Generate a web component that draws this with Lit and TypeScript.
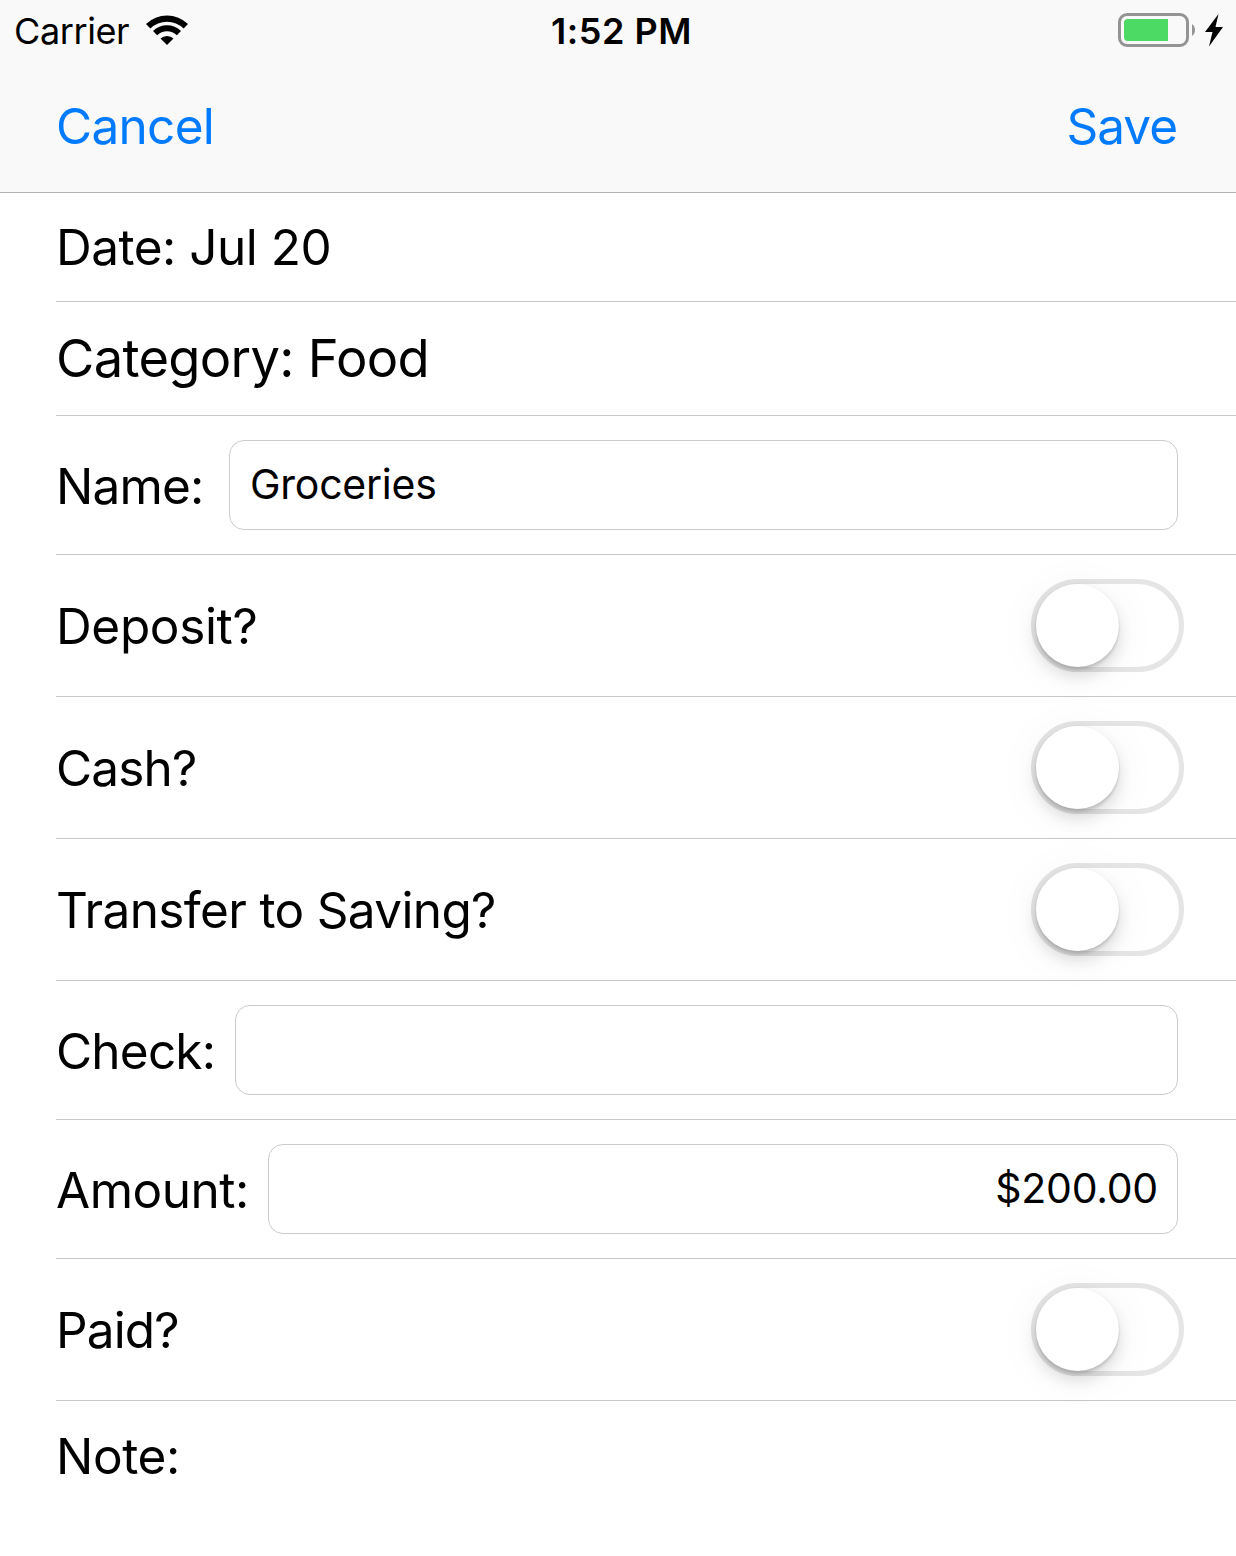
import { LitElement, html, css } from "lit";
import { customElement, property } from "lit/decorators.js";

@customElement("ios-switch")
class IosSwitch extends LitElement {
  static styles = css`
    :host { display: block; flex: none; width: 153px; height: 93px; }
    .track { box-sizing: border-box; width: 153px; height: 93px; border: 5px solid #e5e5e5; border-radius: 47px; background: #fff; }
    .knob { width: 83px; height: 83px; border-radius: 50%; background: #fff; box-shadow: 0 0 0 1px rgba(0,0,0,.02), 0 3px 3px rgba(0,0,0,.13), 0 9px 16px rgba(0,0,0,.13), 0 6px 50px rgba(0,0,0,.05); }
  `;
  render() { return html`<div class="track"><div class="knob"></div></div>`; }
}

@customElement("text-box")
class TextBox extends LitElement {
  @property() value = "";
  static styles = css`
    :host { display: flex; flex: none; box-sizing: border-box; height: 90px; margin-left: auto; border: 1px solid #cbcbcb; border-radius: 15px; background: #fff; padding: 16px 20px 0; font-size: 41px; line-height: 54px; letter-spacing: -0.25px; }
    :host([align="end"]) { justify-content: flex-end; padding-right: 19px; }
  `;
  render() { return html`<span>${this.value}</span>`; }
}

@customElement("form-row")
class FormRow extends LitElement {
  @property() label = "";
  static styles = css`
    :host { display: flex; box-sizing: border-box; align-items: center; height: 142px; margin-left: 56px; border-bottom: 1px solid #c8c7cc; font-size: 49.5px; }
    :host([kind="date"]) { height: 109px; }
    :host([kind="category"]) { height: 114px; font-size: 52.5px; }
    :host([kind="field"]) { height: 139px; padding-right: 58px; }
    :host([kind="toggle"]) { justify-content: space-between; padding-right: 52px; }
    :host([kind="note"]) { height: 155px; align-items: flex-start; padding-top: 25px; border-bottom: 0; }
    .label { flex: none; white-space: nowrap; line-height: 60px; }
    :host([kind="field"]) .label { padding-top: 2px; }
    :host([kind="toggle"]) .label { padding-top: 1px; }
    :host([kind="category"]) .label { padding-bottom: 2px; }
  `;
  render() { return html`<span class="label">${this.label}</span><slot></slot>`; }
}

@customElement("app-root")
export class AppRoot extends LitElement {
  static styles = css`
    :host { display: block; width: 1236px; height: 1556px; overflow: hidden; background: #fff; color: #000; font-family: Inter, sans-serif; font-size: 49.5px; }
    .header { box-sizing: border-box; height: 193px; background: #f9f9f9; border-bottom: 1px solid #b2b2b2; }
    .status { display: grid; grid-template-columns: 1fr auto 1fr; height: 62px; align-items: center; font-size: 36px; line-height: 44px; }
    .carrier { display: flex; align-items: center; gap: 16px; padding-left: 14px; letter-spacing: -0.4px; }
    .time { font-weight: 600; letter-spacing: 0.5px; padding-left: 7px; }
    .power { display: flex; justify-content: flex-end; padding-right: 10px; }
    .wifi, .battery { display: block; margin-bottom: 3px; }
    .nav { display: flex; justify-content: space-between; padding: 34px 59px 0 56px; line-height: 60px; color: #007aff; letter-spacing: -0.7px; }
    .save { letter-spacing: -1px; }
    .t-date, .t-amount { letter-spacing: -0.5px; }
    .t-category { letter-spacing: -0.7px; }
    .t-name, .t-check { letter-spacing: -0.8px; }
    .t-deposit { letter-spacing: -0.35px; }
    .t-cash, .t-paid { letter-spacing: -0.85px; }
    .t-transfer { letter-spacing: -0.65px; }
    .t-note { letter-spacing: -0.4px; }
    .name { width: 949px; }
    .check { width: 943px; }
    .amount { width: 910px; }
  `;
  render() {
    return html`
      <div class="header">
        <div class="status">
          <div class="carrier"><span>Carrier</span>
            <svg class="wifi" width="44" height="32" viewBox="0 0 44 32">
              <path d="M1 10A30.5 30.5 0 0 1 43 10L38.6 14.4A24 24 0 0 0 5.4 14.4Z"/>
              <path d="M8 17A20 20 0 0 1 36 17L31.8 21.3A14 14 0 0 0 12.2 21.3Z"/>
              <path d="M15.5 24.5A9.5 9.5 0 0 1 28.5 24.5L22 31Z"/>
            </svg>
          </div>
          <span class="time">1:52 PM</span>
          <div class="power">
            <svg class="battery" width="108" height="34" viewBox="0 0 108 34">
              <rect x="1.5" y="1.5" width="68" height="31" rx="7.5" fill="none" stroke="#949494" stroke-width="3"/>
              <path d="M10 6H50V28H10A4 4 0 0 1 6 24V10A4 4 0 0 1 10 6Z" fill="#4cd964"/>
              <path d="M74 11A7.5 7.5 0 0 1 74 23Z" fill="#949494"/>
              <path d="M100.5 1L87 19H94.500L91 33.5L105 14H97.5Z"/>
            </svg>
          </div>
        </div>
        <div class="nav"><span>Cancel</span><span class="save">Save</span></div>
      </div>
      <form-row class="t-date" kind="date" label="Date: Jul 20"></form-row>
      <form-row class="t-category" kind="category" label="Category: Food"></form-row>
      <form-row class="t-name" kind="field" label="Name:"><text-box class="name" value="Groceries"></text-box></form-row>
      <form-row class="t-deposit" kind="toggle" label="Deposit?"><ios-switch></ios-switch></form-row>
      <form-row class="t-cash" kind="toggle" label="Cash?"><ios-switch></ios-switch></form-row>
      <form-row class="t-transfer" kind="toggle" label="Transfer to Saving?"><ios-switch></ios-switch></form-row>
      <form-row class="t-check" kind="field" label="Check:"><text-box class="check"></text-box></form-row>
      <form-row class="t-amount" kind="field" label="Amount:"><text-box class="amount" align="end" value="$200.00"></text-box></form-row>
      <form-row class="t-paid" kind="toggle" label="Paid?"><ios-switch></ios-switch></form-row>
      <form-row class="t-note" kind="note" label="Note:"></form-row>`;
  }
}
